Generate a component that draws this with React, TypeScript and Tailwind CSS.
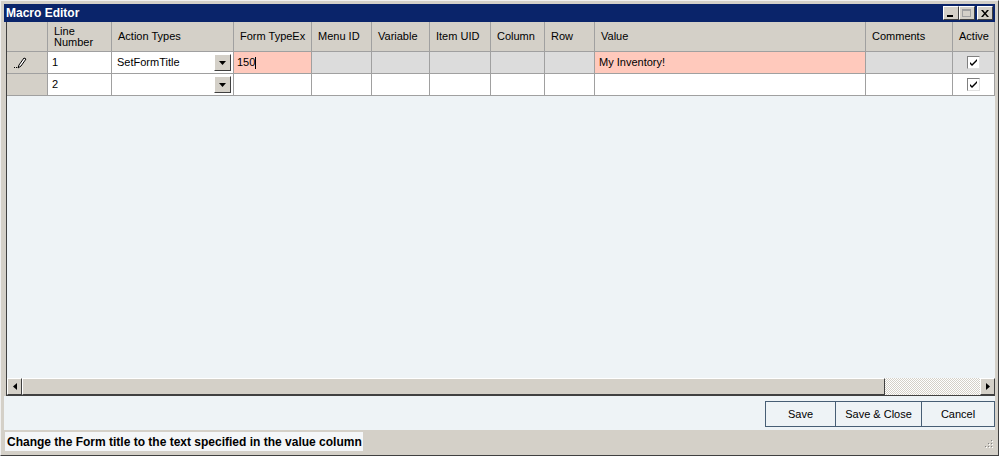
import React from 'react';

const GRID_COLS =
  'grid grid-cols-[41px_64px_122px_78px_60px_58px_61px_54px_50px_271px_87px_42px]';

const headers = [
  '',
  'Line Number',
  'Action Types',
  'Form TypeEx',
  'Menu ID',
  'Variable',
  'Item UID',
  'Column',
  'Row',
  'Value',
  'Comments',
  'Active',
];

function Raised({ className = '', children }: { className?: string; children?: React.ReactNode }) {
  return (
    <div
      className={`bg-[#d4d0c8] border border-t-white border-l-white border-b-[#404040] border-r-[#404040] flex items-center justify-center ${className}`}
    >
      {children}
    </div>
  );
}

function DropButton() {
  return (
    <Raised className="w-[17px] h-[17px]">
      <svg width="7" height="4" viewBox="0 0 7 4">
        <path d="M0 0h7L3.5 4z" fill="#000" />
      </svg>
    </Raised>
  );
}

function Check() {
  return (
    <div className="w-[13px] h-[13px] bg-white border border-t-[#808080] border-l-[#808080] border-b-[#e0e0e0] border-r-[#e0e0e0] flex items-center justify-center">
      <svg width="9" height="9" viewBox="0 0 9 9">
        <path d="M1 4l2 2 5-5v2L3 8 1 6z" fill="#000" />
      </svg>
    </div>
  );
}

function Pencil() {
  return (
    <svg width="14" height="12" viewBox="0 0 14 12">
      <path d="M5 11l1-3 5-7 2 1-5 7z" fill="#fff" stroke="#000" strokeWidth="1" />
      <rect x="1" y="10" width="1" height="1" fill="#000" />
      <rect x="3" y="10" width="1" height="1" fill="#000" />
    </svg>
  );
}

const cell = 'border-r border-b border-[#a0a0a0] flex items-center text-[11px] text-black';

export default function App() {
  return (
    <div
      className="w-[999px] h-[456px] bg-[#d4d0c8] border border-t-[#f0f0f0] border-l-[#f0f0f0] border-b-[#404040] border-r-[#404040] p-[3px] flex flex-col overflow-hidden"
      style={{ fontFamily: '"Liberation Sans", Arial, sans-serif' }}
    >
      {/* title bar */}
      <div className="h-[18px] bg-[#0a246a] flex items-center justify-between pl-[2px] pr-[2px] shrink-0">
        <span className="text-white font-bold text-[12px] leading-none">Macro Editor</span>
        <div className="flex items-center">
          <Raised className="w-[16px] h-[14px]">
            <div className="w-[6px] h-[2px] bg-black mt-[6px] -ml-[2px]" />
          </Raised>
          <Raised className="w-[16px] h-[14px]">
            <div className="w-[9px] h-[8px] border border-[#a0a0a0] border-t-2 -ml-[1px]" />
          </Raised>
          <Raised className="w-[16px] h-[14px] ml-[2px]">
            <svg width="8" height="7" viewBox="0 0 8 7">
              <path d="M0 0h2l2 2.5L6 0h2L5 3.5 8 7H6L4 4.5 2 7H0l3-3.5z" fill="#000" />
            </svg>
          </Raised>
        </div>
      </div>

      {/* grid */}
      <div className="ml-[2px] h-[374px] border-l border-b border-[#404040] bg-[#eef3f6] flex flex-col shrink-0">
        <div className={`${GRID_COLS} h-[30px] bg-[#d4d0c8]`}>
          {headers.map((h, i) => (
            <div
              key={i}
              className="border-r border-b border-[#a0a0a0] flex items-center pl-[6px] text-[11px] leading-[11px] text-black"
            >
              {h === 'Line Number' ? (
                <span>
                  Line
                  <br />
                  Number
                </span>
              ) : (
                h
              )}
            </div>
          ))}
        </div>

        {/* row 1 */}
        <div className={`${GRID_COLS} h-[22px]`}>
          <div className={`${cell} bg-[#d4d0c8] pl-[6px]`}>
            <Pencil />
          </div>
          <div className={`${cell} bg-white pl-[4px]`}>1</div>
          <div className={`${cell} bg-white pl-[5px] justify-between pr-[2px]`}>
            <span>SetFormTitle</span>
            <DropButton />
          </div>
          <div className={`${cell} bg-[#ffc9bc] pl-[3px]`}>
            150<span className="w-px h-[12px] bg-black" />
          </div>
          <div className={`${cell} bg-[#dcdcdc]`} />
          <div className={`${cell} bg-[#dcdcdc]`} />
          <div className={`${cell} bg-[#dcdcdc]`} />
          <div className={`${cell} bg-[#dcdcdc]`} />
          <div className={`${cell} bg-[#dcdcdc]`} />
          <div className={`${cell} bg-[#ffc9bc] pl-[4px]`}>My Inventory!</div>
          <div className={`${cell} bg-[#dcdcdc]`} />
          <div className={`${cell} bg-[#dcdcdc] justify-center`}>
            <Check />
          </div>
        </div>

        {/* row 2 */}
        <div className={`${GRID_COLS} h-[22px]`}>
          <div className={`${cell} bg-[#d4d0c8]`} />
          <div className={`${cell} bg-white pl-[4px]`}>2</div>
          <div className={`${cell} bg-white justify-end pr-[2px]`}>
            <DropButton />
          </div>
          <div className={`${cell} bg-white`} />
          <div className={`${cell} bg-white`} />
          <div className={`${cell} bg-white`} />
          <div className={`${cell} bg-white`} />
          <div className={`${cell} bg-white`} />
          <div className={`${cell} bg-white`} />
          <div className={`${cell} bg-white`} />
          <div className={`${cell} bg-white`} />
          <div className={`${cell} bg-white justify-center`}>
            <Check />
          </div>
        </div>

        <div className="flex-1" />

        {/* horizontal scrollbar */}
        <div className="h-[17px] flex shrink-0">
          <Raised className="w-[15px] h-[17px]">
            <svg width="4" height="7" viewBox="0 0 4 7">
              <path d="M4 0v7L0 3.5z" fill="#000" />
            </svg>
          </Raised>
          <Raised className="w-[863px] h-[17px]" />
          <div className="w-[95px] h-[17px] bg-[repeating-conic-gradient(#d4d0c8_0_25%,#ffffff_0_50%)] bg-[length:2px_2px]" />
          <Raised className="w-[15px] h-[17px]">
            <svg width="4" height="7" viewBox="0 0 4 7">
              <path d="M0 0v7l4-3.5z" fill="#000" />
            </svg>
          </Raised>
        </div>
      </div>

      {/* button row */}
      <div className="h-[34px] bg-[#eef3f6] flex justify-end items-start pt-[5px] shrink-0">
        <div className="flex h-[26px] border border-[#475e75] text-[11px] text-black">
          <div className="w-[70px] flex items-center justify-center border-r border-[#475e75]">Save</div>
          <div className="w-[86px] flex items-center justify-center border-r border-[#475e75]">Save &amp; Close</div>
          <div className="w-[72px] flex items-center justify-center">Cancel</div>
        </div>
      </div>

      {/* status bar */}
      <div className="flex-1 flex items-start pt-[2px] pl-[1px] relative">
        <div className="h-[19px] w-[358px] bg-[#f4f6f8] flex items-center pl-[2px] text-[12px] font-bold text-black">
          Change the Form title to the text specified in the value column
        </div>
        <svg className="absolute right-[2px] bottom-[2px]" width="10" height="10" viewBox="0 0 10 10">
          {[
            [8, 0],
            [5, 3],
            [8, 3],
            [2, 6],
            [5, 6],
            [8, 6],
          ].map(([x, y], i) => (
            <g key={i}>
              <rect x={x} y={y} width="1" height="1" fill="#808080" />
              <rect x={x + 1} y={y + 1} width="1" height="1" fill="#ffffff" />
            </g>
          ))}
        </svg>
      </div>
    </div>
  );
}
